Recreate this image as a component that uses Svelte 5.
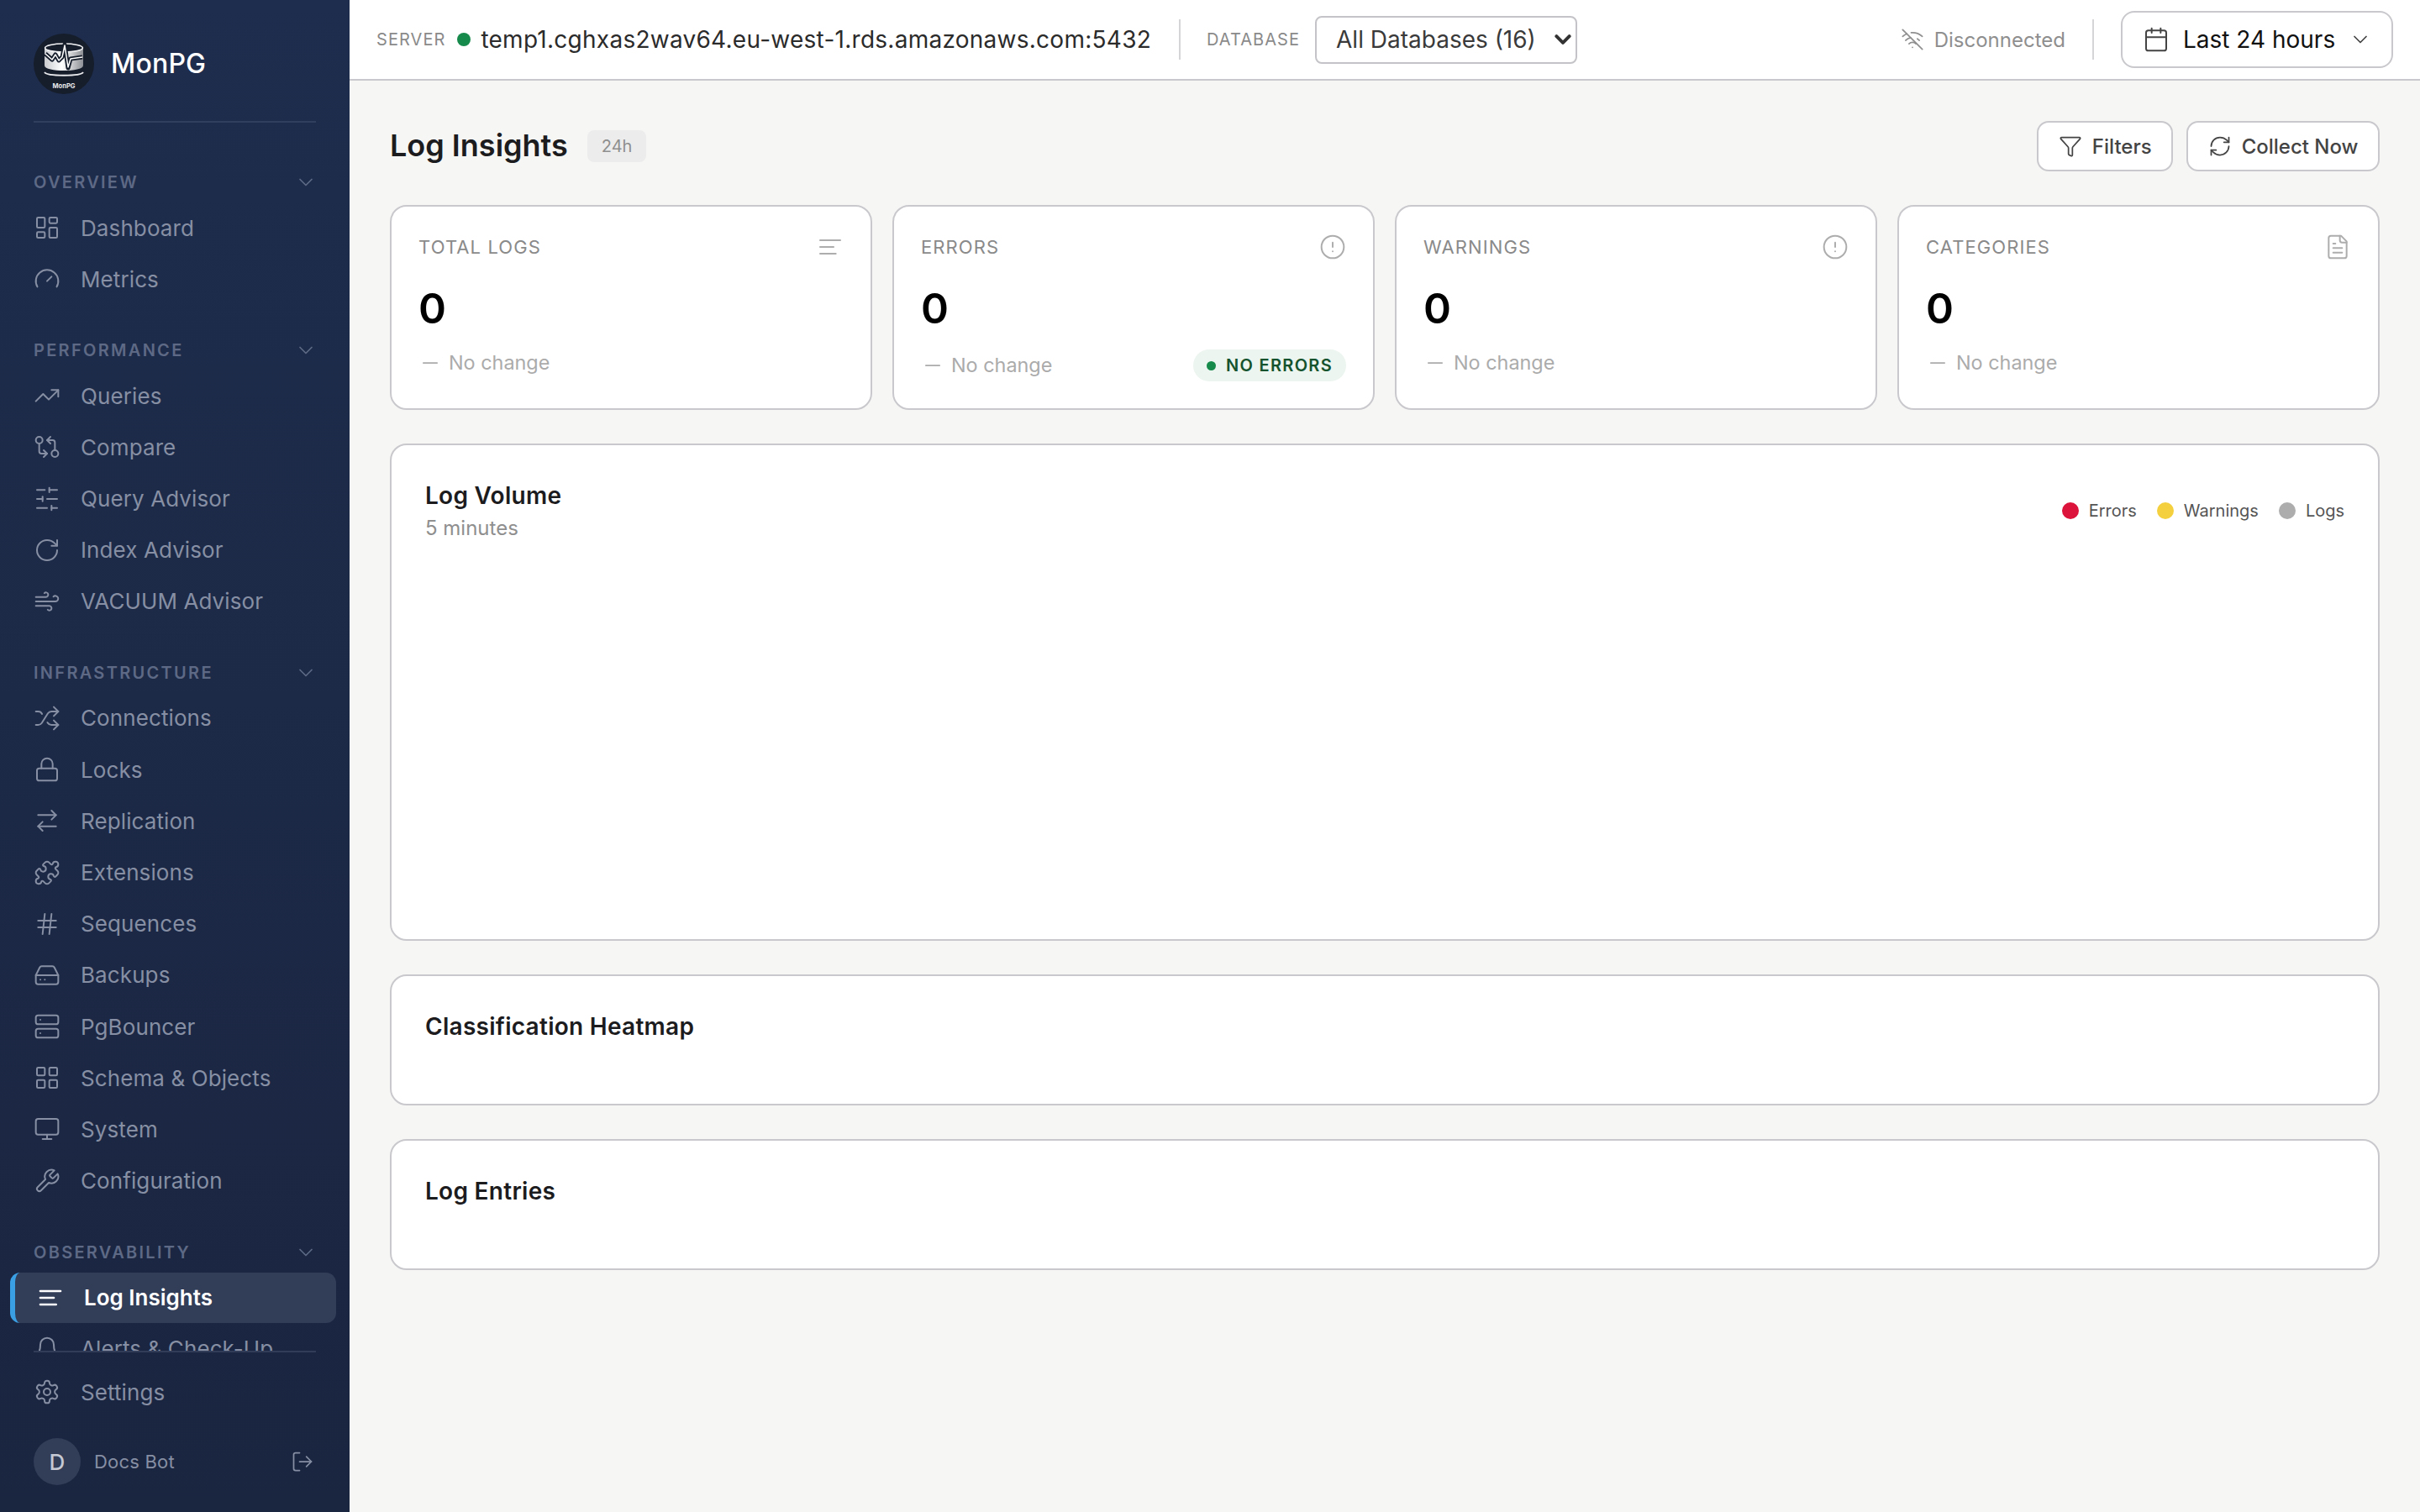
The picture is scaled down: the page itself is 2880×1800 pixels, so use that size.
<script>
  const I = {
    dashboard: '<rect width="7" height="9" x="3" y="3" rx="1"/><rect width="7" height="5" x="14" y="3" rx="1"/><rect width="7" height="9" x="14" y="12" rx="1"/><rect width="7" height="5" x="3" y="16" rx="1"/>',
    gauge: '<path d="m12 14 4-4"/><path d="M3.34 19a10 10 0 1 1 17.32 0"/>',
    trending: '<path d="M16 7h6v6"/><path d="m22 7-8.5 8.5-5-5L2 17"/>',
    compare: '<circle cx="5" cy="6" r="3"/><path d="M12 6h5a2 2 0 0 1 2 2v7"/><path d="m15 9-3-3 3-3"/><circle cx="19" cy="18" r="3"/><path d="M12 18H7a2 2 0 0 1-2-2V9"/><path d="m9 15 3 3-3 3"/>',
    sliders: '<line x1="21" x2="14" y1="4" y2="4"/><line x1="10" x2="3" y1="4" y2="4"/><line x1="21" x2="12" y1="12" y2="12"/><line x1="8" x2="3" y1="12" y2="12"/><line x1="21" x2="16" y1="20" y2="20"/><line x1="12" x2="3" y1="20" y2="20"/><line x1="14" x2="14" y1="2" y2="6"/><line x1="8" x2="8" y1="10" y2="14"/><line x1="16" x2="16" y1="18" y2="22"/>',
    rotate: '<path d="M21 12a9 9 0 1 1-9-9c2.52 0 4.93 1 6.74 2.74L21 8"/><path d="M21 3v5h-5"/>',
    wind: '<path d="M17.7 7.7a2.5 2.5 0 1 1 1.8 4.3H2"/><path d="M9.6 4.6A2 2 0 1 1 11 8H2"/><path d="M12.6 19.4A2 2 0 1 0 14 16H2"/>',
    shuffle: '<path d="m18 14 4 4-4 4"/><path d="m18 2 4 4-4 4"/><path d="M2 18h1.973a4 4 0 0 0 3.3-1.7l5.454-8.6a4 4 0 0 1 3.3-1.7H22"/><path d="M2 6h1.972a4 4 0 0 1 3.6 2.2"/><path d="M22 18h-6.041a4 4 0 0 1-3.3-1.8l-.359-.45"/>',
    lock: '<rect width="18" height="11" x="3" y="11" rx="2" ry="2"/><path d="M7 11V7a5 5 0 0 1 10 0v4"/>',
    swap: '<path d="m16 3 4 4-4 4"/><path d="M20 7H4"/><path d="m8 21-4-4 4-4"/><path d="M4 17h16"/>',
    puzzle: '<path d="M15.39 4.39a1 1 0 0 0 1.68-.474 2.5 2.5 0 1 1 3.014 3.015 1 1 0 0 0-.474 1.68l1.683 1.682a2.414 2.414 0 0 1 0 3.414L19.61 15.39a1 1 0 0 1-1.68-.474 2.5 2.5 0 1 0-3.014 3.015 1 1 0 0 1 .474 1.68l-1.683 1.682a2.414 2.414 0 0 1-3.414 0L8.61 19.61a1 1 0 0 0-1.68.474 2.5 2.5 0 1 1-3.014-3.015 1 1 0 0 0 .474-1.68l-1.683-1.682a2.414 2.414 0 0 1 0-3.414L4.39 8.61a1 1 0 0 1 1.68.474 2.5 2.5 0 1 0 3.014-3.015 1 1 0 0 1-.474-1.68l1.683-1.682a2.414 2.414 0 0 1 3.414 0z"/>',
    hash: '<line x1="4" x2="20" y1="9" y2="9"/><line x1="4" x2="20" y1="15" y2="15"/><line x1="10" x2="8" y1="3" y2="21"/><line x1="16" x2="14" y1="3" y2="21"/>',
    drive: '<line x1="22" x2="2" y1="12" y2="12"/><path d="M5.45 5.11 2 12v6a2 2 0 0 0 2 2h16a2 2 0 0 0 2-2v-6l-3.45-6.89A2 2 0 0 0 16.76 4H7.24a2 2 0 0 0-1.79 1.11z"/><line x1="6" x2="6.01" y1="16" y2="16"/><line x1="10" x2="10.01" y1="16" y2="16"/>',
    server: '<rect width="20" height="8" x="2" y="2" rx="2" ry="2"/><rect width="20" height="8" x="2" y="14" rx="2" ry="2"/><line x1="6" x2="6.01" y1="6" y2="6"/><line x1="6" x2="6.01" y1="18" y2="18"/>',
    grid: '<rect width="7" height="7" x="3" y="3" rx="1"/><rect width="7" height="7" x="14" y="3" rx="1"/><rect width="7" height="7" x="14" y="14" rx="1"/><rect width="7" height="7" x="3" y="14" rx="1"/>',
    monitor: '<rect width="20" height="14" x="2" y="3" rx="2"/><line x1="8" x2="16" y1="21" y2="21"/><line x1="12" x2="12" y1="17" y2="21"/>',
    wrench: '<path d="M14.7 6.3a1 1 0 0 0 0 1.4l1.6 1.6a1 1 0 0 0 1.4 0l3.77-3.77a6 6 0 0 1-7.94 7.94l-6.91 6.91a2.12 2.12 0 0 1-3-3l6.91-6.91a6 6 0 0 1 7.94-7.94l-3.76 3.76z"/>',
    logs: '<path d="M15 12H3"/><path d="M17 18H3"/><path d="M21 6H3"/>',
    bell: '<path d="M6 8a6 6 0 0 1 12 0c0 7 3 9 3 9H3s3-2 3-9"/><path d="M10.3 21a1.94 1.94 0 0 0 3.4 0"/>',
    settings: '<path d="M12.22 2h-.44a2 2 0 0 0-2 2v.18a2 2 0 0 1-1 1.73l-.43.25a2 2 0 0 1-2 0l-.15-.08a2 2 0 0 0-2.73.73l-.22.38a2 2 0 0 0 .73 2.73l.15.1a2 2 0 0 1 1 1.72v.51a2 2 0 0 1-1 1.74l-.15.09a2 2 0 0 0-.73 2.73l.22.38a2 2 0 0 0 2.73.73l.15-.08a2 2 0 0 1 2 0l.43.25a2 2 0 0 1 1 1.73V20a2 2 0 0 0 2 2h.44a2 2 0 0 0 2-2v-.18a2 2 0 0 1 1-1.73l.43-.25a2 2 0 0 1 2 0l.15.08a2 2 0 0 0 2.73-.73l.22-.39a2 2 0 0 0-.73-2.73l-.15-.08a2 2 0 0 1-1-1.74v-.5a2 2 0 0 1 1-1.74l.15-.09a2 2 0 0 0 .73-2.73l-.22-.38a2 2 0 0 0-2.73-.73l-.15.08a2 2 0 0 1-2 0l-.43-.25a2 2 0 0 1-1-1.73V4a2 2 0 0 0-2-2z"/><circle cx="12" cy="12" r="3"/>',
    logout: '<path d="M9 21H5a2 2 0 0 1-2-2V5a2 2 0 0 1 2-2h4"/><polyline points="16 17 21 12 16 7"/><line x1="21" x2="9" y1="12" y2="12"/>',
    wifiOff: '<path d="M12 20h.01"/><path d="M8.5 16.429a5 5 0 0 1 7 0"/><path d="M5 12.859a10 10 0 0 1 5.17-2.69"/><path d="M19 12.859a10 10 0 0 0-2.007-1.523"/><path d="M2 8.82a15 15 0 0 1 4.177-2.643"/><path d="M22 8.82a15 15 0 0 0-11.288-3.764"/><path d="m2 2 20 20"/>',
    calendar: '<path d="M8 2v4"/><path d="M16 2v4"/><rect width="18" height="18" x="3" y="4" rx="2"/><path d="M3 10h18"/>',
    chevron: '<path d="m6 9 6 6 6-6"/>',
    filter: '<path d="M10 20a1 1 0 0 0 .553.895l2 1A1 1 0 0 0 14 21v-7a2 2 0 0 1 .517-1.341L21.74 4.67A1 1 0 0 0 21 3H3a1 1 0 0 0-.742 1.67l7.225 7.989A2 2 0 0 1 10 14z"/>',
    refresh: '<path d="M3 12a9 9 0 0 1 9-9 9.75 9.75 0 0 1 6.74 2.74L21 8"/><path d="M21 3v5h-5"/><path d="M21 12a9 9 0 0 1-9 9 9.75 9.75 0 0 1-6.74-2.74L3 16"/><path d="M8 16H3v5"/>',
    alert: '<circle cx="12" cy="12" r="10"/><line x1="12" x2="12" y1="8" y2="12"/><line x1="12" x2="12.01" y1="16" y2="16"/>',
    file: '<path d="M15 2H6a2 2 0 0 0-2 2v16a2 2 0 0 0 2 2h12a2 2 0 0 0 2-2V7Z"/><path d="M14 2v4a2 2 0 0 0 2 2h4"/><path d="M10 9H8"/><path d="M16 13H8"/><path d="M16 17H8"/>',
    minus: '<path d="M5 12h14"/>'
  };

  const sections = [
    { title: 'Overview', items: [['Dashboard', 'dashboard'], ['Metrics', 'gauge']] },
    { title: 'Performance', items: [['Queries', 'trending'], ['Compare', 'compare'], ['Query Advisor', 'sliders'], ['Index Advisor', 'rotate'], ['VACUUM Advisor', 'wind']] },
    { title: 'Infrastructure', items: [['Connections', 'shuffle'], ['Locks', 'lock'], ['Replication', 'swap'], ['Extensions', 'puzzle'], ['Sequences', 'hash'], ['Backups', 'drive'], ['PgBouncer', 'server'], ['Schema & Objects', 'grid'], ['System', 'monitor'], ['Configuration', 'wrench']] },
    { title: 'Observability', items: [['Log Insights', 'logs', true], ['Alerts & Check-Up', 'bell']] }
  ];

  const stats = [
    { label: 'Total Logs', icon: 'logs' },
    { label: 'Errors', icon: 'alert', pill: 'No Errors' },
    { label: 'Warnings', icon: 'alert' },
    { label: 'Categories', icon: 'file' }
  ];

  const legend = [['Errors', 'e'], ['Warnings', 'w'], ['Logs', 'l']];
</script>

{#snippet icon(name, cls = '')}
  <svg class="ic {cls}" viewBox="0 0 24 24" fill="none" stroke="currentColor" stroke-width="1.5" stroke-linecap="round" stroke-linejoin="round">{@html I[name]}</svg>
{/snippet}

<div class="app">
  <aside class="side">
    <div class="brand">
      <svg class="logo" viewBox="0 0 72 72">
        <defs>
          <linearGradient id="diskfill" x1="0" x2="1" y1="0" y2="0">
            <stop offset="0" stop-color="#c9cbce" />
            <stop offset="0.45" stop-color="#ffffff" />
            <stop offset="1" stop-color="#8d9095" />
          </linearGradient>
        </defs>
        <circle cx="36" cy="36" r="36" fill="#161d2b" />
        <path d="M13 17 V38 C13 46 59 46 59 38 V17 Z" fill="url(#diskfill)" />
        <ellipse cx="36" cy="17" rx="22.4" ry="5" fill="#161d2b" stroke="#f2f3f4" stroke-width="1.6" />
        <path d="M14 24 L22 31 L26 25 L30 32 L34 28 L37 13 L41 41 L44 30 L58 28" fill="none" stroke="#161d2b" stroke-width="5" stroke-linejoin="round" />
        <path d="M14 24 L22 31 L26 25 L30 32 L34 28 L37 14 L41 40 L44 30 L58 28" fill="none" stroke="#fff" stroke-width="1.5" stroke-linejoin="round" />
        <path d="M13 46 C16 51 56 51 59 46" fill="none" stroke="#e8eaec" stroke-width="1.8" />
        <text x="36" y="65" text-anchor="middle" class="logotext">MonPG</text>
      </svg>
      <span class="brandname">MonPG</span>
    </div>

    <nav class="nav">
      {#each sections as s}
        <section class="sec">
          <div class="sechead">
            <span>{s.title}</span>
            {@render icon('chevron', 'secchev')}
          </div>
          <ul>
            {#each s.items as [label, ic, active]}
              <li class="item" class:active>
                {@render icon(ic)}
                <span>{label}</span>
              </li>
            {/each}
          </ul>
        </section>
      {/each}
    </nav>

    <div class="foot">
      <div class="item">
        {@render icon('settings')}
        <span>Settings</span>
      </div>
      <div class="user">
        <span class="avatar">D</span>
        <span class="uname">Docs Bot</span>
        {@render icon('logout', 'logout')}
      </div>
    </div>
  </aside>

  <div class="main">
    <header class="top">
      <span class="caps">Server</span>
      <span class="dot"></span>
      <span class="host">temp1.cghxas2wav64.eu-west-1.rds.amazonaws.com:5432</span>
      <span class="sep"></span>
      <span class="caps">Database</span>
      <span class="dbwrap">
        <select class="db"><option>All Databases (16)</option></select>
        <svg class="dbchev" viewBox="0 0 18 11" fill="none" stroke="#333" stroke-width="3.6" stroke-linecap="round" stroke-linejoin="round"><path d="M2 2 9 9 16 2" /></svg>
      </span>
      <span class="spacer"></span>
      {@render icon('wifiOff', 'wifi')}
      <span class="disc">Disconnected</span>
      <span class="sep sep2"></span>
      <button class="range">
        {@render icon('calendar', 'cal')}
        <span>Last 24 hours</span>
        {@render icon('chevron', 'rchev')}
      </button>
    </header>

    <main class="page">
      <div class="titlerow">
        <h1>Log Insights</h1>
        <span class="badge">24h</span>
        <span class="spacer"></span>
        <button class="btn">{@render icon('filter')}<span>Filters</span></button>
        <button class="btn">{@render icon('refresh')}<span>Collect Now</span></button>
      </div>

      <div class="stats">
        {#each stats as st}
          <div class="card stat">
            <div class="stathead">
              <span class="statlabel">{st.label}</span>
              {@render icon(st.icon, 'staticon')}
            </div>
            <div class="value">0</div>
            <div class="statfoot">
              {@render icon('minus', 'dash')}
              <span class="nochange">No change</span>
              {#if st.pill}
                <span class="pill"><i></i>{st.pill}</span>
              {/if}
            </div>
          </div>
        {/each}
      </div>

      <div class="card panel volume">
        <div class="panelhead">
          <div>
            <h2>Log Volume</h2>
            <p>5 minutes</p>
          </div>
          <div class="legend">
            {#each legend as [l, c]}
              <span class="lg"><i class={c}></i>{l}</span>
            {/each}
          </div>
        </div>
      </div>

      <div class="card panel short"><h2>Classification Heatmap</h2></div>
      <div class="card panel short"><h2>Log Entries</h2></div>
    </main>
  </div>
</div>

<style>
  :global(body) { margin: 0; }
  :global(*) { box-sizing: border-box; }
  .app {
    width: 2880px; height: 1800px; display: flex; overflow: hidden;
    font-family: Inter, "Liberation Sans", sans-serif; background: #f6f6f5;
  }
  .ic { width: 32px; height: 32px; flex: none; display: block; }

  .side {
    width: 416px; flex: none; height: 100%; display: flex; flex-direction: column;
    background: linear-gradient(180deg, #1e2d4d 0%, #1a2540 100%);
  }
  .brand {
    height: 146px; flex: none; margin: 0 40px; padding-top: 40px; display: flex; align-items: flex-start;
    gap: 20px; border-bottom: 2px solid #313f5e;
  }
  .logo { width: 72px; height: 72px; flex: none; }
  .logotext { font: 700 7.6px Inter, sans-serif; fill: #e8eaec; }
  .brandname { font-size: 32px; font-weight: 500; color: #fff; line-height: 72px; letter-spacing: 0.2px; }

  .nav { flex: 1; min-height: 0; overflow: hidden; padding-top: 59px; }
  .sec + .sec { margin-top: 43px; }
  .sechead {
    height: 24px; margin: 0 38px 12px 40px; display: flex; align-items: center; justify-content: space-between;
    font-size: 20px; font-weight: 600; letter-spacing: 2.3px; text-transform: uppercase; color: #5d6985;
  }
  .sechead :global(.secchev) { width: 28px; height: 28px; }
  ul { list-style: none; margin: 0; padding: 0; display: flex; flex-direction: column; gap: 1.2px; }
  .item {
    height: 60px; margin: 0 16px 0 12px; padding-left: 28px; display: flex; align-items: center; gap: 24px;
    font-size: 26px; color: #868fa3; border-radius: 12px; white-space: nowrap; letter-spacing: 0.1px;
  }
  .item.active {
    border-left: 6px solid #3b9fe3; padding-left: 26px; background: #323d58; color: #fff; font-weight: 600; letter-spacing: 0;
  }
  .item.active :global(.ic) { stroke-width: 2; }
  .foot { flex: none; margin: 0; height: 192px; position: relative; display: flex; flex-direction: column; padding-top: 19px; }
  .foot::before { content: ""; position: absolute; top: 0; left: 40px; right: 40px; height: 2px; background: #313c58; }
  .user { margin: 25px 42px 0 40px; display: flex; align-items: center; height: 56px; color: #868fa3; }
  .avatar {
    width: 56px; height: 56px; border-radius: 50%; background: #323d58; color: #c4c9d4; display: flex;
    align-items: center; justify-content: center; font-size: 26px; font-weight: 500;
  }
  .uname { margin-left: 16px; font-size: 22px; flex: 1; letter-spacing: 0.2px; }
  .user :global(.logout) { width: 28px; height: 28px; }

  .main { flex: 1; min-width: 0; display: flex; flex-direction: column; }
  .top {
    height: 96px; flex: none; background: #fff; border-bottom: 2px solid #c9c9cd; display: flex; align-items: center;
    padding: 0 32px 0 32px;
  }
  .caps { font-size: 20px; letter-spacing: 1.05px; text-transform: uppercase; color: #8a8a8a; }
  .dot { width: 16px; height: 16px; border-radius: 50%; background: #168a4b; margin-left: 14px; }
  .host { margin-left: 12px; font-size: 28px; letter-spacing: 0.26px; color: #2b2b2b; white-space: nowrap; }
  .sep { width: 2px; height: 48px; background: #d5d5d8; margin: 0 31px 0 33px; flex: none; }
  .dbwrap { position: relative; margin-left: 18px; display: block; width: 312px; height: 57px; }
  .db {
    appearance: none; -webkit-appearance: none; width: 100%; height: 100%; padding: 0 28px 0 23px; font-family: Inter, sans-serif; font-size: 28px;
    color: #3a3a3a; background: #fff; border: 2px solid #c4c4c8; border-radius: 8px;
  }
  .dbchev { position: absolute; right: 7px; top: 22px; width: 20px; height: 12px; pointer-events: none; }
  .spacer { flex: 1; }
  .top :global(.wifi) { width: 28px; height: 28px; color: #8f8f8f; margin-right: 12px; }
  .disc { font-size: 24px; color: #8f8f8f; }
  .sep2 { margin: 0 32px; }
  .range {
    height: 68px; width: 324px; padding: 0 23px 0 24px; margin: 0; display: flex; align-items: center; background: #fff; border: 2px solid #c9c9cd;
    border-radius: 16px; font: inherit; font-size: 28px; color: #111;
  }
  .range :global(.cal) { width: 32px; height: 32px; color: #444; margin-right: 16px; }
  .range :global(.rchev) { width: 28px; height: 28px; color: #444; margin-left: auto; }

  .page { flex: 1; padding: 48px; display: flex; flex-direction: column; gap: 40px; }
  .titlerow { display: flex; align-items: center; height: 60px; }
  h1 { margin: 0 0 2px; font-size: 36px; font-weight: 600; color: #1c1c1e; }
  .badge {
    margin-left: 23px; height: 38px; padding: 0 17px; display: flex; align-items: center; background: #ececec; border-radius: 8px;
    font-size: 20px; color: #8f8f8f;
  }
  .btn {
    height: 60px; margin-left: 16px; padding: 0 23.5px; display: flex; align-items: center; gap: 12px; background: #fff;
    border: 2px solid #c9c9cd; border-radius: 14px; font: inherit; font-size: 24px; font-weight: 500; color: #444;
  }
  .btn :global(.ic) { width: 28px; height: 28px; }

  .card { background: #fff; border: 2px solid #c9c9cd; border-radius: 20px; }
  .stats { display: grid; grid-template-columns: repeat(4, 1fr); gap: 24px; }
  .stat { height: 244px; padding: 32px; }
  .stathead { display: flex; align-items: center; justify-content: space-between; height: 32px; }
  .statlabel { font-size: 22px; letter-spacing: 1.1px; text-transform: uppercase; color: #8a8a8a; }
  .stathead :global(.staticon) { color: #adadad; }
  .value { margin-top: 27px; height: 60px; line-height: 60px; font-size: 50px; font-weight: 600; color: #000; }
  .statfoot { margin-top: 19px; display: flex; align-items: center; min-height: 32px; color: #ababab; }
  .statfoot :global(.dash) { width: 28px; height: 28px; margin-right: 8px; }
  .nochange { font-size: 23.4px; padding-bottom: 2px; }
  .pill {
    margin-left: auto; height: 38px; padding: 0 16px 0 16px; display: flex; align-items: center; gap: 12px; background: #ecf5ef; border-radius: 19px;
    font-size: 20px; font-weight: 600; letter-spacing: 1.3px; text-transform: uppercase; color: #14532d;
  }
  .pill i { width: 11px; height: 11px; border-radius: 50%; background: #168a4b; }

  .panel { padding: 40px; }
  .volume { height: 592px; }
  .short { height: 156px; }
  h2 { margin: 0; font-size: 28px; line-height: 40px; font-weight: 600; color: #1c1c1e; letter-spacing: 0.28px; }
  .panelhead { display: flex; align-items: center; justify-content: space-between; }
  p { margin: 1px 0 0; font-size: 24px; line-height: 36px; color: #8f8f8f; }
  .legend { display: flex; gap: 24px; margin-top: -2px; }
  .lg { display: flex; align-items: center; gap: 12px; font-size: 20px; color: #555; }
  .lg i { width: 20px; height: 20px; border-radius: 50%; }
  .lg .e { background: #dc143c; }
  .lg .w { background: #f4d03f; }
  .lg .l { background: #adadad; }
</style>
